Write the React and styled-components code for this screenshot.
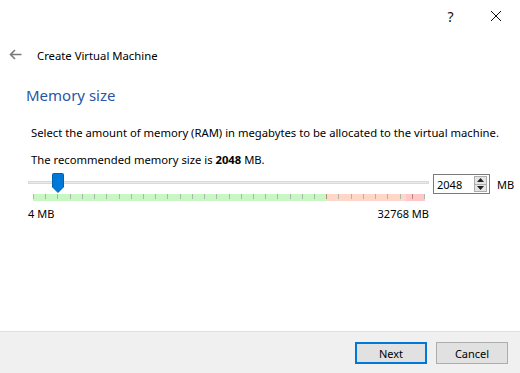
import React from "react";
import styled, { createGlobalStyle } from "styled-components";

const GlobalStyle = createGlobalStyle`
  html, body {
    margin: 0;
    padding: 0;
    background: #ffffff;
  }
  body {
    font-family: "Noto Sans", "Open Sans", sans-serif;
    color: #000000;
  }
`;

const TICKS = 33;

export default function App() {
  return (
    <>
      <GlobalStyle />
      <Window>
        <TitleBar>
          <TitleButton>?</TitleButton>
          <TitleButton>
            <svg width="12" height="12" viewBox="0 0 12 12">
              <path d="M1 1 L11 11 M11 1 L1 11" stroke="#111" strokeWidth="1" fill="none" />
            </svg>
          </TitleButton>
        </TitleBar>
        <NavRow>
          <BackArrow>
            <svg width="13" height="11" viewBox="0 0 13 11">
              <path d="M6 1 L1.5 5.5 L6 10 M1.5 5.5 H12.5" stroke="#7a7a7a" strokeWidth="1.6" fill="none" />
            </svg>
          </BackArrow>
          <NavTitle>Create Virtual Machine</NavTitle>
        </NavRow>
        <Content>
          <Heading>Memory size</Heading>
          <Para>
            Select the amount of memory (RAM) in megabytes to be allocated to the virtual machine.
          </Para>
          <Para $gap={13}>
            The recommended memory size is <b>2048</b> MB.
          </Para>
          <SliderRow>
            <SliderColumn>
              <Track>
                <Groove />
                <Handle>
                  <svg width="12" height="20" viewBox="0 0 12 20">
                    <path d="M0.5 1.5 Q0.5 0.5 1.5 0.5 H10.5 Q11.5 0.5 11.5 1.5 V14 L6 19.5 L0.5 14 Z" fill="#0078d7" stroke="#0063b1" strokeWidth="1" />
                  </svg>
                </Handle>
              </Track>
              <Scale>
                <Zone $color="#c9f7c4" $grow={293} />
                <Zone $color="#ffd7c8" $grow={79} />
                <Zone $color="#ffc7c7" $grow={19} />
                <Ticks>
                  {Array.from({ length: TICKS }, (_, i) => (
                    <Tick key={i} $dark={i === 24 || i === 31} />
                  ))}
                </Ticks>
              </Scale>
              <Limits>
                <span>4 MB</span>
                <span>32768 MB</span>
              </Limits>
            </SliderColumn>
            <SpinBox>
              <SpinValue>2048</SpinValue>
              <SpinButtons>
                <SpinArrow>
                  <svg width="7" height="4" viewBox="0 0 7 4">
                    <path d="M0 4 L3.5 0 L7 4 Z" fill="#222" />
                  </svg>
                </SpinArrow>
                <SpinArrow>
                  <svg width="7" height="4" viewBox="0 0 7 4">
                    <path d="M0 0 L3.5 4 L7 0 Z" fill="#222" />
                  </svg>
                </SpinArrow>
              </SpinButtons>
            </SpinBox>
            <Unit>MB</Unit>
          </SliderRow>
        </Content>
        <Footer>
          <Button $primary>Next</Button>
          <Button>Cancel</Button>
        </Footer>
      </Window>
    </>
  );
}

const Window = styled.div`
  width: 520px;
  height: 373px;
  display: flex;
  flex-direction: column;
  background: #ffffff;
  overflow: hidden;
`;

const TitleBar = styled.div`
  height: 32px;
  display: flex;
  justify-content: flex-end;
  align-items: center;
  padding-right: 2px;
`;

const TitleButton = styled.div`
  width: 45px;
  height: 32px;
  display: flex;
  align-items: center;
  justify-content: center;
  font-size: 14px;
  color: #111;
`;

const NavRow = styled.div`
  display: flex;
  align-items: center;
  height: 24px;
  margin-top: 11px;
  padding-left: 9px;
`;

const BackArrow = styled.div`
  width: 28px;
  display: flex;
  align-items: center;
  margin-top: -2px;
`;

const NavTitle = styled.div`
  font-size: 11.3px;
  color: #000;
`;

const Content = styled.div`
  flex: 1;
  display: flex;
  flex-direction: column;
  padding: 0 0 0 28px;
`;

const Heading = styled.div`
  font-size: 15px;
  color: #2a55a5;
  margin-top: 18px;
  margin-left: -2px;
  height: 24px;
`;

const Para = styled.div`
  font-size: 11.25px;
  margin-top: ${(p) => p.$gap ?? 16}px;
  margin-left: 3px;
  height: 14px;
  white-space: nowrap;
  b {
    font-weight: 700;
  }
`;

const SliderRow = styled.div`
  display: flex;
  align-items: flex-start;
  margin-top: 7px;
`;

const SliderColumn = styled.div`
  width: 401px;
  display: flex;
  flex-direction: column;
`;

const Track = styled.div`
  position: relative;
  height: 20px;
`;

const Groove = styled.div`
  position: absolute;
  left: 0;
  right: 0;
  top: 8px;
  height: 3px;
  background: #eaeaea;
  border: 1px solid #dadada;
  box-sizing: border-box;
`;

const Handle = styled.div`
  position: absolute;
  left: 24px;
  top: 0;
  line-height: 0;
`;

const Scale = styled.div`
  position: relative;
  display: flex;
  height: 7px;
  margin: 1px 4px 0 5px;
`;

const Zone = styled.div`
  flex: ${(p) => p.$grow} 0 0;
  background: ${(p) => p.$color};
`;

const Ticks = styled.div`
  position: absolute;
  inset: 0;
  display: flex;
  justify-content: space-between;
  align-items: flex-start;
`;

const Tick = styled.div`
  width: 1px;
  height: 5px;
  background: ${(p) => (p.$dark ? "#b08a80" : "#a9b8a8")};
`;

const Limits = styled.div`
  display: flex;
  justify-content: space-between;
  font-size: 11px;
  margin-top: 5px;
`;

const SpinBox = styled.div`
  margin-left: 4px;
  margin-top: 1px;
  width: 57px;
  height: 20px;
  box-sizing: border-box;
  border: 1px solid #7a7a7a;
  display: flex;
  align-items: center;
  padding-left: 3px;
`;

const SpinValue = styled.div`
  flex: 1;
  font-size: 11px;
`;

const SpinButtons = styled.div`
  width: 13px;
  height: 16px;
  margin-right: 2px;
  display: flex;
  flex-direction: column;
  border: 1px solid #adadad;
  box-sizing: border-box;
  background: #e5e5e5;
`;

const SpinArrow = styled.div`
  flex: 1;
  display: flex;
  align-items: center;
  justify-content: center;
  & + & {
    border-top: 1px solid #adadad;
  }
`;

const Unit = styled.div`
  font-size: 11px;
  margin-left: 7px;
  margin-top: 4px;
`;

const Footer = styled.div`
  height: 42px;
  background: #f0f0f0;
  border-top: 1px solid #dfdfdf;
  display: flex;
  justify-content: flex-end;
  align-items: flex-start;
  gap: 9px;
  padding: 10px 12px 0 0;
  box-sizing: border-box;
`;

const Button = styled.div`
  width: 72px;
  height: 22px;
  box-sizing: border-box;
  border: ${(p) => (p.$primary ? "2px solid #0078d7" : "1px solid #adadad")};
  background: #e1e1e1;
  display: flex;
  align-items: center;
  justify-content: center;
  font-size: 11px;
`;
